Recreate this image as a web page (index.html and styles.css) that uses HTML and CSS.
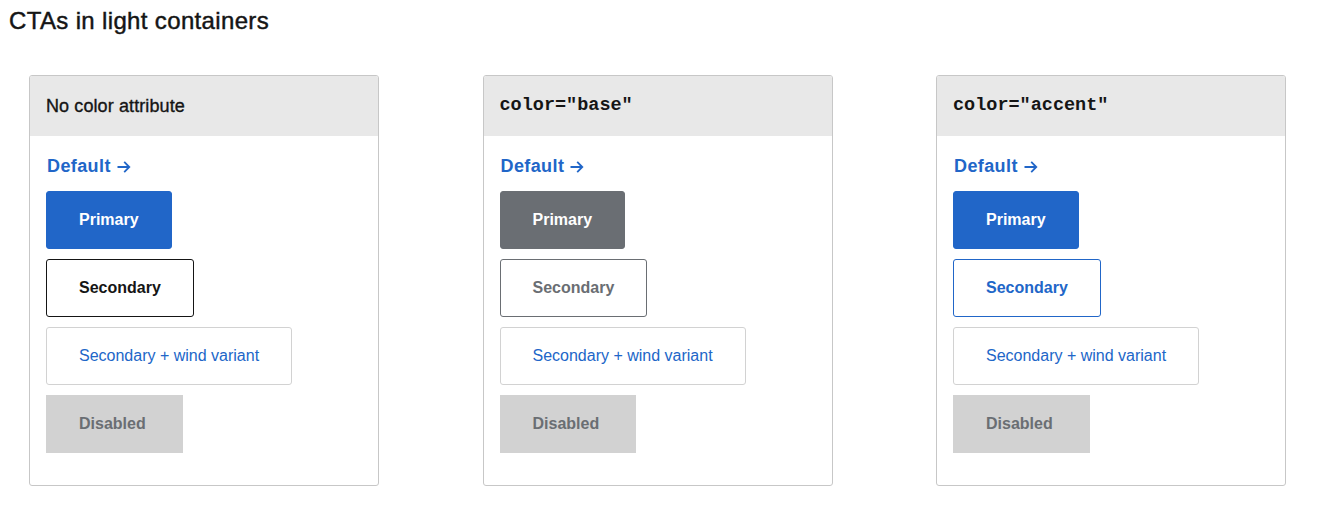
FILE: index.html
```html
<!DOCTYPE html>
<html lang="en">
<head>
<meta charset="utf-8">
<title>CTAs in light containers</title>
<link rel="stylesheet" href="styles.css">
</head>
<body>
<h2 class="title">CTAs in light containers</h2>
<div class="cards">
  <section class="card">
    <div class="card-header">No color attribute</div>
    <div class="card-body">
      <a class="link" href="#">Default<svg class="arrow" width="14" height="12" viewBox="0 0 14 12"><path d="M0.5 6H12.6M7.2 0.9L12.3 6L7.2 11.1" fill="none" stroke="currentColor" stroke-width="1.8"/></svg></a>
      <span class="btn btn-primary">Primary</span>
      <span class="btn btn-secondary">Secondary</span>
      <span class="btn btn-wind">Secondary + wind variant</span>
      <span class="btn btn-disabled">Disabled</span>
    </div>
  </section>
  <section class="card card-base">
    <div class="card-header code">color="base"</div>
    <div class="card-body">
      <a class="link" href="#">Default<svg class="arrow" width="14" height="12" viewBox="0 0 14 12"><path d="M0.5 6H12.6M7.2 0.9L12.3 6L7.2 11.1" fill="none" stroke="currentColor" stroke-width="1.8"/></svg></a>
      <span class="btn btn-primary">Primary</span>
      <span class="btn btn-secondary">Secondary</span>
      <span class="btn btn-wind">Secondary + wind variant</span>
      <span class="btn btn-disabled">Disabled</span>
    </div>
  </section>
  <section class="card card-accent">
    <div class="card-header code">color="accent"</div>
    <div class="card-body">
      <a class="link" href="#">Default<svg class="arrow" width="14" height="12" viewBox="0 0 14 12"><path d="M0.5 6H12.6M7.2 0.9L12.3 6L7.2 11.1" fill="none" stroke="currentColor" stroke-width="1.8"/></svg></a>
      <span class="btn btn-primary">Primary</span>
      <span class="btn btn-secondary">Secondary</span>
      <span class="btn btn-wind">Secondary + wind variant</span>
      <span class="btn btn-disabled">Disabled</span>
    </div>
  </section>
</div>
</body>
</html>
```
FILE: styles.css
```css
body {
  margin: 8px;
  background: #ffffff;
  color: #151515;
  font-family: "Liberation Sans", Arial, sans-serif;
}

.title {
  margin: 0 0 41px 1px;
  font-size: 24px;
  line-height: 26px;
  font-weight: 400;
  color: #151515;
  letter-spacing: 0.35px;
  -webkit-text-stroke: 0.45px #151515;
}

.cards {
  display: grid;
  grid-template-columns: repeat(3, 350px);
  column-gap: 103.5px;
  margin-left: 21px;
  align-items: start;
}

.card {
  border: 1px solid #c7c7c7;
  border-radius: 3px;
  overflow: hidden;
  background: #ffffff;
}

.card-header {
  background: #e8e8e8;
  padding: 16px;
  font-size: 18px;
  line-height: 28px;
  color: #151515;
  letter-spacing: 0.1px;
  -webkit-text-stroke: 0.35px #151515;
}

.card-header.code {
  font-family: "Liberation Mono", "Courier New", monospace;
  font-weight: 700;
  font-size: 18.5px;
  letter-spacing: 0;
  -webkit-text-stroke: 0;
}

.card-body {
  display: flex;
  flex-direction: column;
  align-items: flex-start;
  gap: 10px;
  padding: 17px 16px 32px;
}

.link {
  display: inline-flex;
  align-items: center;
  margin-bottom: 1px;
  margin-left: 1px;
  font-size: 18px;
  line-height: 27px;
  font-weight: 700;
  letter-spacing: 0.4px;
  color: #2166c8;
  text-decoration: none;
}

.arrow {
  margin-left: 6px;
  margin-top: 1px;
}

.btn {
  display: inline-block;
  padding: 16px 32px;
  border: 1px solid transparent;
  border-radius: 3px;
  font-size: 16px;
  line-height: 24px;
  font-weight: 700;
  white-space: nowrap;
}

.btn-primary {
  background: #2166c8;
  border-color: #2166c8;
  color: #ffffff;
}

.btn-secondary {
  background: #ffffff;
  border-color: #151515;
  color: #151515;
}

.btn-wind {
  background: #ffffff;
  border-color: #d2d2d2;
  color: #2166c8;
  font-weight: 400;
}

.btn-disabled {
  background: #d2d2d2;
  border-color: #d2d2d2;
  border-radius: 0;
  color: #6a6e73;
  padding-right: 36px;
}

.card-base .btn-primary {
  background: #6a6e73;
  border-color: #6a6e73;
}

.card-base .btn-secondary {
  border-color: #6a6e73;
  color: #6a6e73;
}

.card-accent .btn-secondary {
  border-color: #2166c8;
  color: #2166c8;
}
```
